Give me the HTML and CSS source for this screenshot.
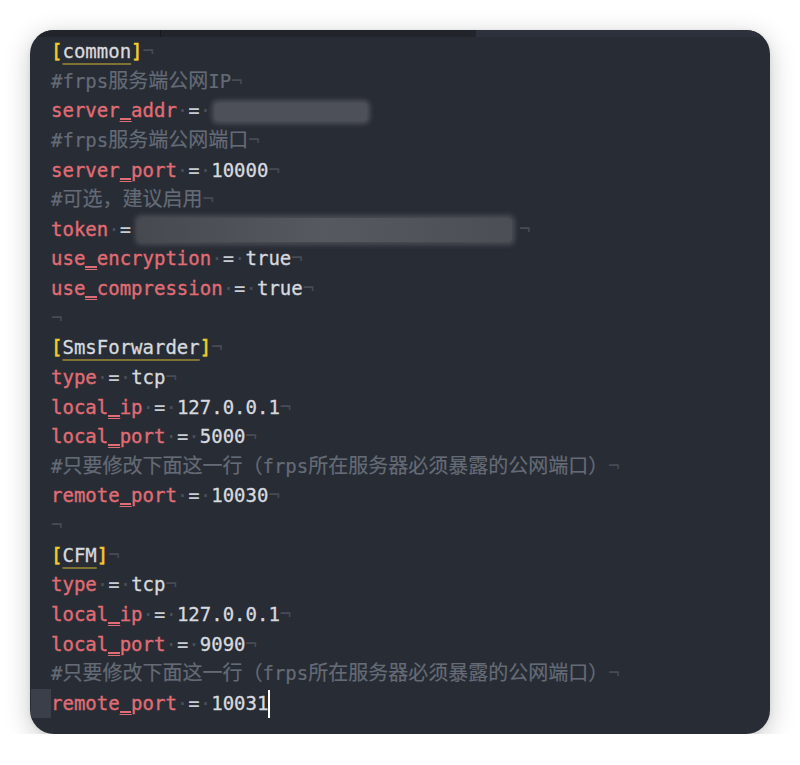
FILE: index.html
```html
<!DOCTYPE html>
<html lang="zh-CN">
<head>
<meta charset="utf-8">
<title>frpc.ini</title>
<link rel="stylesheet" href="styles.css">
</head>
<body>
<div class="editor">
  <div class="tabs">
    <div class="tab-left"><div class="tab first"></div><div class="tab second"></div></div>
    <div class="tab-right"></div>
  </div>
  <div class="code">
    <div class="line"><span class="gut"></span><span class="br">[</span><span class="sec">common</span><span class="br">]</span><span class="eol">¬</span></div>
    <div class="line"><span class="gut"></span><span class="cm">#frps<span class="cj">服务端公网</span>IP</span><span class="eol">¬</span></div>
    <div class="line"><span class="gut"></span><span class="key">server<span class="us">_</span>addr</span><span class="ws">·</span><span class="op">=</span><span class="ws">·</span><span class="blur addr"></span></div>
    <div class="line"><span class="gut"></span><span class="cm">#frps<span class="cj">服务端公网端口</span></span><span class="eol">¬</span></div>
    <div class="line"><span class="gut"></span><span class="key">server<span class="us">_</span>port</span><span class="ws">·</span><span class="op">=</span><span class="ws">·</span><span class="val">10000</span><span class="eol">¬</span></div>
    <div class="line"><span class="gut"></span><span class="cm">#<span class="cj">可选，建议启用</span></span><span class="eol">¬</span></div>
    <div class="line"><span class="gut"></span><span class="key">token</span><span class="ws">·</span><span class="op">=</span><span class="blur tok"></span><span class="eol">¬</span></div>
    <div class="line"><span class="gut"></span><span class="key">use<span class="us">_</span>encryption</span><span class="ws">·</span><span class="op">=</span><span class="ws">·</span><span class="val">true</span><span class="eol">¬</span></div>
    <div class="line"><span class="gut"></span><span class="key">use<span class="us">_</span>compression</span><span class="ws">·</span><span class="op">=</span><span class="ws">·</span><span class="val">true</span><span class="eol">¬</span></div>
    <div class="line"><span class="gut"></span><span class="eol">¬</span></div>
    <div class="line"><span class="gut"></span><span class="br">[</span><span class="sec">SmsForwarder</span><span class="br">]</span><span class="eol">¬</span></div>
    <div class="line"><span class="gut"></span><span class="key">type</span><span class="ws">·</span><span class="op">=</span><span class="ws">·</span><span class="val">tcp</span><span class="eol">¬</span></div>
    <div class="line"><span class="gut"></span><span class="key">local<span class="us">_</span>ip</span><span class="ws">·</span><span class="op">=</span><span class="ws">·</span><span class="val">127.0.0.1</span><span class="eol">¬</span></div>
    <div class="line"><span class="gut"></span><span class="key">local<span class="us">_</span>port</span><span class="ws">·</span><span class="op">=</span><span class="ws">·</span><span class="val">5000</span><span class="eol">¬</span></div>
    <div class="line"><span class="gut"></span><span class="cm">#<span class="cj">只要修改下面这一行（</span>frps<span class="cj">所在服务器必须暴露的公网端口）</span></span><span class="eol">¬</span></div>
    <div class="line"><span class="gut"></span><span class="key">remote<span class="us">_</span>port</span><span class="ws">·</span><span class="op">=</span><span class="ws">·</span><span class="val">10030</span><span class="eol">¬</span></div>
    <div class="line"><span class="gut"></span><span class="eol">¬</span></div>
    <div class="line"><span class="gut"></span><span class="br">[</span><span class="sec">CFM</span><span class="br">]</span><span class="eol">¬</span></div>
    <div class="line"><span class="gut"></span><span class="key">type</span><span class="ws">·</span><span class="op">=</span><span class="ws">·</span><span class="val">tcp</span><span class="eol">¬</span></div>
    <div class="line"><span class="gut"></span><span class="key">local<span class="us">_</span>ip</span><span class="ws">·</span><span class="op">=</span><span class="ws">·</span><span class="val">127.0.0.1</span><span class="eol">¬</span></div>
    <div class="line"><span class="gut"></span><span class="key">local<span class="us">_</span>port</span><span class="ws">·</span><span class="op">=</span><span class="ws">·</span><span class="val">9090</span><span class="eol">¬</span></div>
    <div class="line"><span class="gut"></span><span class="cm">#<span class="cj">只要修改下面这一行（</span>frps<span class="cj">所在服务器必须暴露的公网端口）</span></span><span class="eol">¬</span></div>
    <div class="line current"><span class="gut"></span><span class="key">remote<span class="us">_</span>port</span><span class="ws">·</span><span class="op">=</span><span class="ws">·</span><span class="val">10031</span><span class="cursor"></span></div>
  </div>
</div>
</body>
</html>
```

FILE: styles.css
```css
html, body {
  margin: 0;
  padding: 0;
  background: #ffffff;
}

body {
  padding: 30px 30px 0 30px;
}

.editor {
  width: 740px;
  height: 704px;
  background: #282c34;
  border-radius: 24px;
  overflow: hidden;
  box-shadow: 0 6px 26px rgba(0, 0, 0, 0.22), 0 1px 4px rgba(0, 0, 0, 0.08);
}

.tabs {
  display: flex;
  height: 7px;
}

.tab-left {
  width: 446px;
  display: flex;
  background: #21252b;
}

.tab.first {
  width: 130px;
  border-right: 1px solid #16181d;
}

.tab.second {
  flex: 1;
}

.tab-right {
  flex: 1;
  background: #2c313b;
}

.code {
  padding: 0 0 0 1px;
  font-family: "DejaVu Sans Mono", "Noto Sans CJK SC", monospace;
  font-size: 19px;
  line-height: 29.64px;
  color: #d6d9df;
}

.line {
  height: 29.64px;
  white-space: pre;
}

.gut {
  display: inline-block;
  width: 20px;
  height: 29.64px;
  vertical-align: top;
}

.current .gut {
  background: #3a3f4a;
}

.key {
  color: #e06c75;
  -webkit-text-stroke: 0.35px #e06c75;
}

.us {
  background: linear-gradient(#e06c75, #e06c75) 0 calc(100% - 1px) / 100% 2px no-repeat;
}

.val {
  color: #d6d9df;
  -webkit-text-stroke: 0.3px #d6d9df;
}

.op {
  color: #c8ccd3;
}

.ws {
  color: #4a505c;
}

.eol {
  color: #464b56;
}

.cm {
  color: #656b76;
  -webkit-text-stroke: 0.2px #656b76;
}

.cj {
  font-size: 20px;
}

.br {
  color: #f0cc2c;
  -webkit-text-stroke: 0.6px #f0cc2c;
}

.sec {
  color: #d6d9df;
  -webkit-text-stroke: 0.3px #d6d9df;
  text-decoration: underline 2px #7f7234;
  text-underline-offset: 5px;
}

.blur {
  display: inline-block;
  height: 18px;
  background: #4d5058;
  box-shadow: 0 0 5px 3px #4d5058;
  border-radius: 3px;
  vertical-align: middle;
}

.blur.addr {
  width: 152px;
  margin-left: 4px;
}

.blur.tok {
  width: 374px;
  height: 24px;
  margin-left: 7px;
  margin-right: 7px;
  background: linear-gradient(90deg, #46494f, #56595f 50%, #4b4e55);
  box-shadow: 0 0 5px 3px #4a4d54;
}

.cursor {
  display: inline-block;
  width: 2px;
  height: 28px;
  background: #ffffff;
  vertical-align: middle;
}
```
